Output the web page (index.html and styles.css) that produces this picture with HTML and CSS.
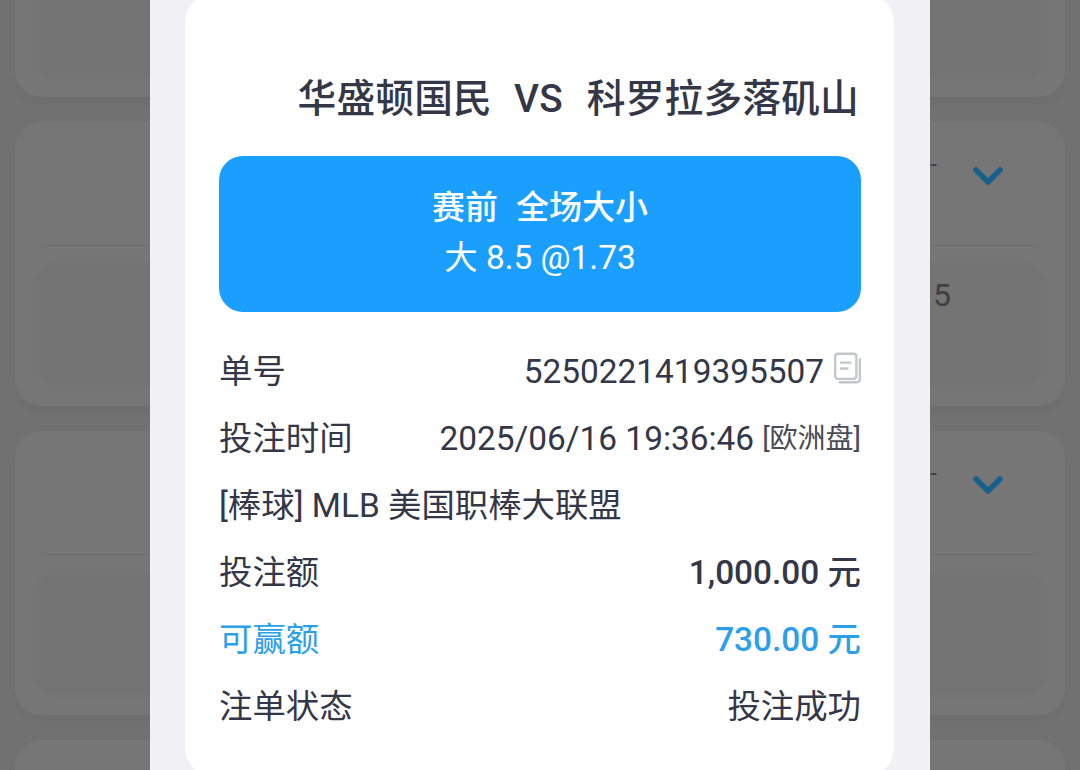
FILE: index.html
```html
<!DOCTYPE html>
<html lang="zh-CN">
<head>
<meta charset="utf-8">
<title>注单详情</title>
<link rel="stylesheet" href="styles.css">
</head>
<body>
<div class="list">
  <section class="card"><div class="head"></div><div class="panel"></div></section>
  <section class="card">
    <div class="head"><span class="dash">-</span><svg class="chev" viewBox="0 0 30 20"><path d="M3 4 L15 16 L27 4" /></svg></div>
    <div class="panel"><span class="num">5</span></div>
  </section>
  <section class="card">
    <div class="head"><span class="dash">-</span><svg class="chev" viewBox="0 0 30 20"><path d="M3 4 L15 16 L27 4" /></svg></div>
    <div class="panel"></div>
  </section>
  <section class="card"><div class="head"></div></section>
</div>
<div class="modal">
  <div class="sheet">
    <h1 class="title"><span>华盛顿国民</span><span class="vs">VS</span><span>科罗拉多落矶山</span></h1>
    <div class="banner">
      <div class="market"><span>赛前</span><span>全场大小</span></div>
      <div class="pick">大 8.5 @1.73</div>
    </div>
    <div class="rows">
      <div class="row"><span>单号</span><span class="val"><span>5250221419395507</span><svg class="copy" viewBox="0 0 28 32"><rect x="1.2" y="1.2" width="22" height="26" rx="3" /><path d="M7 10.500 H17 M7 16.500 H14" /><path d="M26.800 7 V27.500 Q26.800 30.800 23.500 30.800 H6" /></svg></span></div>
      <div class="row"><span>投注时间</span><span class="val"><span>2025/06/16 19:36:46</span><small class="tag">[欧洲盘]</small></span></div>
      <div class="row"><span>[棒球] MLB 美国职棒大联盟</span></div>
      <div class="row"><span>投注额</span><strong class="val">1,000.00 元</strong></div>
      <div class="row win"><span>可赢额</span><strong class="val">730.00 元</strong></div>
      <div class="row"><span>注单状态</span><span class="val">投注成功</span></div>
    </div>
  </div>
</div>
</body>
</html>
```
FILE: styles.css
```css
* { box-sizing: border-box; }
html, body { margin: 0; height: 100%; }
body {
  position: relative;
  width: 1080px;
  height: 770px;
  overflow: hidden;
  background: #717172;
  font-family: Roboto, "Noto Sans CJK SC", sans-serif;
  color: #333747;
}
.list {
  display: flex;
  flex-direction: column;
  gap: 24.500px;
  padding: 0 15px;
  margin-top: -187.500px;
}
.card {
  flex: none;
  height: 284.500px;
  background: #767676;
  border-radius: 26px;
  padding: 0 22px;
  box-shadow: 0 6px 8px rgba(0, 0, 0, 0.03);
}
.head {
  height: 124px;
  margin: 0 8px;
  padding-right: 32px;
  border-bottom: 1px solid #6b6b6b;
  display: flex;
  justify-content: flex-end;
  align-items: flex-start;
}
.dash { margin: 30px 36px 0 0; font-size: 24px; line-height: 24px; color: #3e3e46; }
.chev { width: 30px; height: 20px; margin-top: 44px; }
.chev path { fill: none; stroke: #18608b; stroke-width: 5.500; stroke-linecap: round; stroke-linejoin: round; }
.panel {
  position: relative;
  height: 120px;
  margin-top: 19.500px;
  background: #747474;
  border-radius: 20px;
  box-shadow: 0 0 10px rgba(0, 0, 0, 0.02);
  display: flex;
  justify-content: flex-end;
  padding: 11px 92px 0 0;
}
.num { font-size: 32px; line-height: 38px; color: #3e3e46; }
.modal {
  position: absolute;
  left: 150px;
  top: 0;
  width: 780px;
  height: 770px;
  background: #f0f0f5;
  padding: 0 36px 0 35px;
  overflow: hidden;
}
.sheet {
  height: 782px;
  margin-top: -6px;
  background: #fff;
  border-radius: 28px;
  padding: 0 33px 0 34px;
}
.title {
  margin: 0;
  height: 162px;
  padding: 80px 2px 0 0;
  display: flex;
  justify-content: flex-end;
  gap: 24px;
  font-size: 38.700px;
  letter-spacing: 0.2px;
  line-height: 50px;
  font-weight: 500;
}
.vs { margin-left: -2px; }
.banner {
  height: 156px;
  border-radius: 24px;
  background: #1a9fff;
  color: #fff;
  text-align: center;
  padding-top: 28px;
}
.market { display: flex; justify-content: center; gap: 18px; font-size: 33px; line-height: 48px; font-weight: 500; }
.pick { font-size: 33.400px; line-height: 48px; margin-top: 2px; }
.rows { margin-top: 26.500px; }
.row {
  height: 67px;
  display: flex;
  justify-content: space-between;
  align-items: center;
  font-size: 33.400px;
  line-height: 44px;
  white-space: nowrap;
}
.val { display: flex; align-items: center; gap: 8px; }
.row strong.val { font-weight: 500; }
.tag { font-size: 28px; color: #4a4b55; }
.copy { width: 27px; height: 32px; margin: -8px 0 0 2px; }
.copy rect, .copy path { fill: none; stroke: #c4c5cb; stroke-width: 2.400; stroke-linecap: round; }
.win { color: #2b9fe8; }
```
